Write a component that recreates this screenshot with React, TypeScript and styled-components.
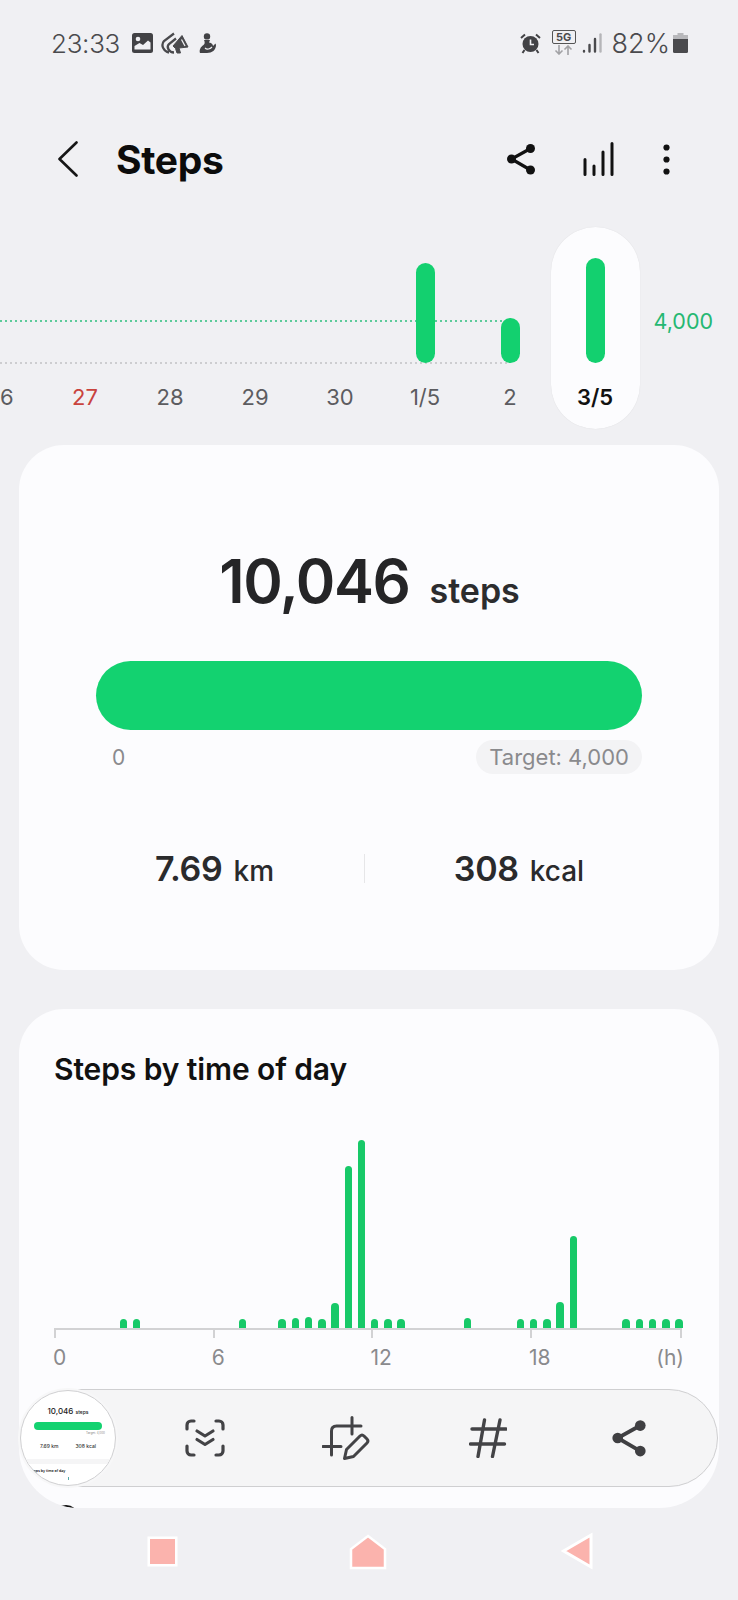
import React from "react";
import styled, { createGlobalStyle } from "styled-components";

const days = [
  { label: "26", height: 0 },
  { label: "27", height: 0, holiday: true },
  { label: "28", height: 0 },
  { label: "29", height: 0 },
  { label: "30", height: 0 },
  { label: "1/5", height: 100 },
  { label: "2", height: 45 },
  { label: "3/5", height: 105, active: true },
];

// one slot per half hour, pixel heights read off the chart
const halfHours = [
  0, 0, 0, 0, 0, 9.5, 9.5, 0, 0, 0, 0, 0, 0, 0, 9.5, 0, 0, 9.5, 10.5, 11, 9.5,
  25, 162, 188, 9.5, 9.5, 9.5, 0, 0, 0, 0, 10.5, 0, 0, 0, 9.5, 9.5, 9.5, 26, 92,
  0, 0, 0, 9.5, 9.5, 9.5, 9.5, 9.5,
];

const hourLabels = ["0", "6", "12", "18"];

const App = () => {
  return (
    <Page>
      <GlobalStyle />
      <StatusBar>
        <StatusGroup>
          <Clock>23:33</Clock>
          <GalleryIcon />
          <MegaphoneIcon />
          <PersonIcon />
        </StatusGroup>
        <StatusGroup>
          <AlarmIcon />
          <Network>
            <NetworkBadge>5G</NetworkBadge>
            <NetworkArrows />
          </Network>
          <SignalIcon />
          <Battery>82%</Battery>
          <BatteryIcon />
        </StatusGroup>
      </StatusBar>

      <Header>
        <HeaderLeft>
          <BackIcon />
          <Title>Steps</Title>
        </HeaderLeft>
        <HeaderActions>
          <ShareIcon width={28} height={32} />
          <BarsIcon />
          <MoreIcon />
        </HeaderActions>
      </Header>

      <DayChart>
        <GuideLine $top={93} $color="#5ccb9a" />
        <GuideLine $top={135} $color="#cdcdd0" />
        {days.map((day) => (
          <DayColumn key={day.label} $active={day.active}>
            <DayBarArea>{day.height > 0 && <DayBar $height={day.height} />}</DayBarArea>
            <DayLabel $active={day.active} $holiday={day.holiday}>
              {day.label}
            </DayLabel>
          </DayColumn>
        ))}
        <TargetValue>4,000</TargetValue>
      </DayChart>

      <SummaryCard>
        <StepsRow>
          <StepsValue>10,046</StepsValue>
          <StepsUnit>steps</StepsUnit>
        </StepsRow>
        <ProgressBar />
        <ProgressFooter>
          <ProgressZero>0</ProgressZero>
          <TargetPill>Target: 4,000</TargetPill>
        </ProgressFooter>
        <Stats>
          <Stat>
            <StatValue>7.69</StatValue>
            <StatUnit>km</StatUnit>
          </Stat>
          <StatDivider />
          <Stat>
            <StatValue>308</StatValue>
            <StatUnit>kcal</StatUnit>
          </Stat>
        </Stats>
      </SummaryCard>

      <TimeCard>
        <CardTitle>Steps by time of day</CardTitle>
        <Plot>
          {halfHours.map((height, index) => (
            <Slot key={index}>{height > 0 && <HourBar $height={height} />}</Slot>
          ))}
        </Plot>
        <Axis>
          <AxisTick />
          <AxisTick />
          <AxisTick />
          <AxisTick $last />
        </Axis>
        <AxisLabels>
          {hourLabels.map((label) => (
            <AxisLabel key={label}>{label}</AxisLabel>
          ))}
          <AxisUnit>(h)</AxisUnit>
        </AxisLabels>
        <NextSectionIcon />
      </TimeCard>

      <NavBar>
        <NavSquare />
        <NavHome viewBox="0 0 38 36">
          <path d="M19 2 L36 15 V34 H2 V15 Z" />
        </NavHome>
        <NavBack viewBox="0 0 34 38">
          <path d="M2.5 19 L30 3 V35 Z" />
        </NavBack>
      </NavBar>

      <CaptureToolbar>
        <Thumbnail>
          <ThumbSteps>
            10,046 <small>steps</small>
          </ThumbSteps>
          <ThumbBar />
          <ThumbTarget>Target: 4,000</ThumbTarget>
          <ThumbStats>
            <span>7.69 km</span>
            <span>308 kcal</span>
          </ThumbStats>
          <ThumbBand />
          <ThumbTitle>Steps by time of day</ThumbTitle>
          <ThumbTick />
        </Thumbnail>
        <ToolSlot>
          <ScanIcon />
        </ToolSlot>
        <ToolSlot>
          <CropEditIcon />
        </ToolSlot>
        <ToolSlot>
          <HashIcon />
        </ToolSlot>
        <ToolSlot>
          <ShareIcon width={34} height={38} />
        </ToolSlot>
      </CaptureToolbar>
    </Page>
  );
};

export default App;

const GalleryIcon = () => (
  <svg width="21" height="20" viewBox="0 0 21 20">
    <rect width="21" height="20" rx="2.5" fill="#424245" />
    <circle cx="6" cy="6" r="2.3" fill="#f0f0f3" />
    <path d="M2.5 16.5 V13 L7.5 10 L11 12 L16 7.5 L18.5 9.5 V16.5 Z" fill="#f0f0f3" />
  </svg>
);

const MegaphoneIcon = () => (
  <svg width="28" height="22" viewBox="0 0 28 22" fill="none" stroke="#4a4a4d" strokeWidth="2.3">
    <path d="M8 20.5 C2.5 19.5 -0.5 13 3 9 L13 1.5" />
    <path d="M13 20.5 C8 20.5 5 15 8 12 L15 6.5" />
    <path d="M12 14 L21 3.5 L27 15 L18 16 L19.5 21 L16 21 L14.5 16.5 Z" fill="#4a4a4d" strokeWidth="1" strokeLinejoin="round" />
    <path d="M20.5 7.5 L24 14" stroke="#f0f0f3" strokeWidth="1.3" />
  </svg>
);

const PersonIcon = () => (
  <PersonSvg width="17" height="20" viewBox="0 0 17 20" fill="#424245">
    <circle cx="8" cy="3.4" r="3.2" />
    <path d="M5 7 H11 L10 9.5 C13 10 14 11.5 14 13 L16.5 10.5 L17 12 C17 17 13 20 8 20 H1 C0 17 1.5 14 4.5 12 C6 11 6 9 5 7 Z" />
    <path d="M6 15 C8 17 11 16 13 14" stroke="#f0f0f3" strokeWidth="1.1" fill="none" />
  </PersonSvg>
);

const AlarmIcon = () => (
  <AlarmSvg width="21" height="21" viewBox="0 0 21 21" fill="none">
    <circle cx="10.5" cy="11" r="8" fill="#424245" />
    <path d="M10.5 6.5 V11.5 H14" stroke="#f0f0f3" strokeWidth="1.6" />
    <path d="M1 5 L5 1.5 M20 5 L16 1.5" stroke="#424245" strokeWidth="2" />
    <path d="M4.5 17 L2.5 20 M16.5 17 L18.5 20" stroke="#424245" strokeWidth="2" />
  </AlarmSvg>
);

const NetworkArrows = () => (
  <svg width="23" height="10" viewBox="0 0 23 10" fill="none" stroke="#a2a2a5" strokeWidth="1.6">
    <path d="M7 0 V9 M3.5 5.5 L7 9 L10.5 5.5" />
    <path d="M16 10 V1 M12.5 4.5 L16 1 L19.5 4.5" />
  </svg>
);

const SignalIcon = () => (
  <svg width="20" height="20" viewBox="0 0 20 20" fill="none" strokeWidth="2.4" strokeLinecap="round">
    <path d="M2 18 V18.5 M7.5 12 V18.5 M13 6 V18.5" stroke="#4a4a4d" />
    <path d="M18.5 1.5 V18.5" stroke="#b5b5b8" />
  </svg>
);

const BatteryIcon = () => (
  <svg width="15" height="20" viewBox="0 0 15 20">
    <path d="M4.5 0 H10.5 V2 H15 V7 H0 V2 H4.5 Z" fill="#b8b8bb" />
    <path d="M0 6 H15 V18.5 Q15 20 13.5 20 H1.5 Q0 20 0 18.5 Z" fill="#4a4a4d" />
  </svg>
);

const BackIcon = () => (
  <svg width="20" height="36" viewBox="0 0 20 36" fill="none" stroke="#161616" strokeWidth="2.6" strokeLinecap="round" strokeLinejoin="round">
    <path d="M18.5 1.5 L1.5 18 L18.5 34.5" />
  </svg>
);

const ShareIcon = ({ width, height }: { width: number; height: number }) => (
  <ShareSvg width={width} height={height} viewBox="0 0 28 32">
    <path d="M23.5 5.5 L4.5 16 L23.5 27" fill="none" stroke="currentColor" strokeWidth="3.2" />
    <circle cx="23.5" cy="5.5" r="4.5" />
    <circle cx="4.5" cy="16" r="4.5" />
    <circle cx="23.5" cy="27" r="4.5" />
  </ShareSvg>
);

const BarsIcon = () => (
  <svg width="32" height="34" viewBox="0 0 32 34" fill="none" stroke="#111" strokeWidth="3" strokeLinecap="round">
    <path d="M2 17.5 V32.5 M11 24 V32.5 M20 10 V32.5 M29 1.5 V32.5" />
  </svg>
);

const MoreIcon = () => (
  <svg width="7" height="31" viewBox="0 0 7 31" fill="#111">
    <circle cx="3.5" cy="3.5" r="3.1" />
    <circle cx="3.5" cy="15.5" r="3.1" />
    <circle cx="3.5" cy="27.5" r="3.1" />
  </svg>
);

const ScanIcon = () => (
  <svg width="40" height="38" viewBox="0 0 40 38" fill="none" stroke="#434346" strokeWidth="3.2" strokeLinecap="round" strokeLinejoin="round">
    <path d="M2 10 V6 A4 4 0 0 1 6 2 H9 M31 2 H34 A4 4 0 0 1 38 6 V10" />
    <path d="M2 27 V32 A4 4 0 0 0 6 36 H9 M31 36 H34 A4 4 0 0 0 38 32 V27" />
    <path d="M12 12 L20 17 L28 12 M12 20.5 L20 25.5 L28 20.5" />
  </svg>
);

const CropEditIcon = () => (
  <svg width="48" height="45" viewBox="0 0 48 45" fill="none" stroke="#434346" strokeWidth="3" strokeLinecap="round" strokeLinejoin="round">
    <path d="M1 30.5 H19 M9.5 39 V15 Q9.5 10 14.5 10 H39 M30 1.5 V18" />
    <path d="M22.5 42.5 L24.5 33.5 L38 20 Q40 18 42 20 L45 23 Q47 25 45 27 L31.5 40.5 Z" />
  </svg>
);

const HashIcon = () => (
  <svg width="38" height="40" viewBox="0 0 38 40" fill="none" stroke="#434346" strokeWidth="3.4" strokeLinecap="round">
    <path d="M3 11 H37 M1.5 26 H35.5 M15.5 2 L9 38.5 M31 2 L23.5 38.5" />
  </svg>
);

const GlobalStyle = createGlobalStyle`
  html, body {
    margin: 0;
    padding: 0;
    background: #f0f0f3;
  }

  body {
    font-family: Inter, "Noto Sans", sans-serif;
  }
`;

const Page = styled.div`
  position: relative;
  width: 738px;
  height: 1600px;
  display: flex;
  flex-direction: column;
  overflow: hidden;
  background: #f0f0f3;
`;

const StatusBar = styled.div`
  height: 86px;
  padding: 0 50px 0 51px;
  display: flex;
  align-items: center;
  justify-content: space-between;
  box-sizing: border-box;
`;

const StatusGroup = styled.div`
  display: flex;
  align-items: center;
  gap: 8px;
`;

const PersonSvg = styled.svg`
  margin-left: 2px;
`;

const AlarmSvg = styled.svg`
  margin-right: 3px;
`;

const Clock = styled.span`
  margin-right: 4px;
  font-size: 26px;
  font-weight: 300;
  letter-spacing: -0.3px;
  color: #4a4a4d;
`;

const Network = styled.div`
  width: 24px;
  margin: -2px -2px 0 0;
  display: flex;
  flex-direction: column;
  align-items: center;
  gap: 1px;
`;

const NetworkBadge = styled.div`
  width: 24px;
  height: 14px;
  box-sizing: border-box;
  border: 1.4px solid #555;
  border-radius: 2px;
  font-size: 11px;
  line-height: 12px;
  font-weight: 700;
  text-align: center;
  color: #4a4a4d;
`;

const Battery = styled.span`
  margin: 0 -5px 0 2px;
  font-size: 27px;
  font-weight: 300;
  color: #4a4a4d;
`;

const Header = styled.header`
  height: 142px;
  padding: 4px 68px 0 58px;
  display: flex;
  align-items: center;
  justify-content: space-between;
  box-sizing: border-box;
`;

const HeaderLeft = styled.div`
  display: flex;
  align-items: center;
  gap: 38px;
`;

const Title = styled.h1`
  margin: 0;
  font-size: 39px;
  font-weight: 700;
  letter-spacing: -0.3px;
  color: #0c0c0c;
`;

const HeaderActions = styled.div`
  display: flex;
  align-items: center;
  gap: 48px;
  color: #111;
`;

const ShareSvg = styled.svg`
  display: block;
  fill: currentColor;
`;

const DayChart = styled.section`
  position: relative;
  height: 202px;
  margin: -1px 0 0 -42.5px;
  width: 780px;
  display: flex;
`;

const GuideLine = styled.div<{ $top: number; $color: string }>`
  position: absolute;
  top: ${(p) => p.$top}px;
  left: 42.5px;
  width: 508px;
  height: 2px;
  background-image: repeating-linear-gradient(
    90deg,
    ${(p) => p.$color} 0 2px,
    transparent 2px 5px
  );
`;

const DayColumn = styled.div<{ $active?: boolean }>`
  position: relative;
  flex: none;
  width: ${(p) => (p.$active ? "89px" : "85px")};
  margin: ${(p) => (p.$active ? "0 -2px" : "0")};
  display: flex;
  flex-direction: column;
  align-items: center;
  border-radius: 45px;
  background: ${(p) => (p.$active ? "#fcfcfe" : "transparent")};
  box-shadow: ${(p) => (p.$active ? "0 0 1px rgba(0, 0, 0, 0.12)" : "none")};
`;

const DayBarArea = styled.div`
  height: 136px;
  display: flex;
  align-items: flex-end;
`;

const DayBar = styled.div<{ $height: number }>`
  width: 19px;
  height: ${(p) => p.$height}px;
  border-radius: 10px;
  background: #13d06f;
`;

const DayLabel = styled.span<{ $active?: boolean; $holiday?: boolean }>`
  margin-top: 20px;
  font-size: 22px;
  line-height: 28px;
  font-weight: ${(p) => (p.$active ? 600 : 400)};
  color: ${(p) => (p.$active ? "#111" : p.$holiday ? "#c9433d" : "#5c5c60")};
`;

const TargetValue = styled.span`
  margin: 82px 0 0 16px;
  font-size: 21.5px;
  line-height: 24px;
  color: #25b872;
`;

const SummaryCard = styled.section`
  height: 525px;
  margin: 16px 19px 0;
  border-radius: 45px;
  background: #fcfcfe;
  display: flex;
  flex-direction: column;
  box-sizing: border-box;
`;

const StepsRow = styled.div`
  margin: 99px 0 0 1px;
  display: flex;
  align-items: baseline;
  justify-content: center;
  gap: 20px;
`;

const StepsValue = styled.span`
  font-size: 60px;
  line-height: 74px;
  font-weight: 600;
  letter-spacing: -1.4px;
  color: #252527;
`;

const StepsUnit = styled.span`
  font-size: 34px;
  font-weight: 600;
  color: #2c2c2e;
`;

const ProgressBar = styled.div`
  height: 69px;
  margin: 43px 77px 0;
  border-radius: 35px;
  background: #13d270;
`;

const ProgressFooter = styled.div`
  margin: 10px 77px 0 93px;
  display: flex;
  align-items: center;
  justify-content: space-between;
`;

const ProgressZero = styled.span`
  font-size: 21px;
  color: #8a8a8d;
`;

const TargetPill = styled.span`
  height: 34px;
  padding: 0 13px;
  border-radius: 17px;
  background: #f3f3f5;
  font-size: 22px;
  line-height: 34px;
  color: #8a8a8d;
`;

const Stats = styled.div`
  margin: 74px 46px 0;
  display: grid;
  grid-template-columns: 299px 1px 1fr;
  align-items: center;
`;

const Stat = styled.div`
  display: flex;
  align-items: baseline;
  justify-content: center;
  gap: 11px;
  color: #2a2a2c;
`;

const StatValue = styled.span`
  font-size: 34px;
  font-weight: 600;
  letter-spacing: -0.3px;
`;

const StatUnit = styled.span`
  font-size: 28px;
  font-weight: 500;
`;

const StatDivider = styled.div`
  height: 29px;
  background: #e6e6e8;
`;

const TimeCard = styled.section`
  height: 499px;
  margin: 39px 19px 0;
  padding: 42px 35px 0;
  border-radius: 45px 45px 60px 60px;
  background: #fcfcfe;
  overflow: hidden;
  box-sizing: border-box;
`;

const CardTitle = styled.h2`
  margin: 0;
  font-size: 30px;
  line-height: 36px;
  font-weight: 600;
  letter-spacing: -0.1px;
  color: #111;
`;

const Plot = styled.div`
  width: 635px;
  height: 199px;
  margin: 42px 0 0 -3.5px;
  display: flex;
  align-items: flex-end;
`;

const Slot = styled.div`
  flex: 1;
  display: flex;
  justify-content: center;
`;

const HourBar = styled.div<{ $height: number }>`
  width: 7.5px;
  height: ${(p) => p.$height}px;
  border-radius: 4px 4px 0 0;
  background: #17c968;
`;

const Axis = styled.div`
  width: 628px;
  height: 10px;
  border-top: 2px solid #d2d2d4;
  display: grid;
  grid-template-columns: 158.7fr 158.7fr 158.7fr 152fr;
  box-sizing: border-box;
`;

const AxisTick = styled.div<{ $last?: boolean }>`
  border-left: 2px solid #d2d2d4;
  border-right: ${(p) => (p.$last ? "2px solid #d2d2d4" : "none")};
`;

const AxisLabels = styled.div`
  width: 631px;
  margin: 8px 0 0 -1px;
  display: grid;
  grid-template-columns: 158.7px 158.7px 158.7px 1fr auto;
  font-size: 21px;
  line-height: 24px;
  color: #8a8a8d;
`;

const AxisLabel = styled.span``;

const AxisUnit = styled.span``;

const NextSectionIcon = styled.div`
  width: 26px;
  height: 26px;
  margin: 135px 0 0 -1px;
  border: 2.5px solid #111;
  border-radius: 50%;
  box-sizing: border-box;
`;

const NavBar = styled.nav`
  flex: 1;
  padding: 28px 143px 0 150px;
  display: flex;
  align-items: flex-start;
  justify-content: space-between;
`;

const NavSquare = styled.div`
  width: 25px;
  height: 25px;
  margin-top: 3px;
  background: #fbb3ad;
  box-shadow: 0 0 0 2.5px #fff;
`;

const NavHome = styled.svg`
  width: 38px;
  height: 36px;
  margin-top: -2px;
  fill: #fbb3ad;
  stroke: #fff;
  stroke-width: 2.5;
`;

const NavBack = styled.svg`
  width: 34px;
  height: 38px;
  margin-top: -4px;
  fill: #fbb3ad;
  stroke: #fff;
  stroke-width: 3;
`;

const CaptureToolbar = styled.div`
  position: absolute;
  top: 1389px;
  left: 19px;
  width: 699px;
  height: 98px;
  border: 1px solid #cfcfd1;
  border-radius: 49px;
  background: #f5f5f6;
  display: flex;
  align-items: center;
  box-sizing: border-box;
`;

const Thumbnail = styled.div`
  flex: none;
  width: 96px;
  height: 96px;
  margin: 0 18px 0 0;
  padding-top: 15px;
  border: 1px solid #d0d0d2;
  border-radius: 50%;
  background: #fff;
  box-shadow: 0 0 0 2px #f7f7f8;
  display: flex;
  flex-direction: column;
  align-items: center;
  overflow: hidden;
  box-sizing: border-box;

  & small {
    font-size: 5px;
  }
`;

const ThumbSteps = styled.span`
  font-size: 8px;
  line-height: 10px;
  font-weight: 500;
  color: #222;
`;

const ThumbBar = styled.div`
  width: 68px;
  height: 8px;
  margin-top: 5px;
  border-radius: 4px;
  background: #13d270;
`;

const ThumbTarget = styled.span`
  align-self: flex-end;
  margin: 1px 10px 0 0;
  font-size: 3px;
  line-height: 4px;
  color: #888;
`;

const ThumbStats = styled.div`
  width: 56px;
  margin-top: 8px;
  display: flex;
  justify-content: space-between;
  font-size: 5px;
  line-height: 7px;
  font-weight: 500;
  color: #333;
`;

const ThumbBand = styled.div`
  width: 100%;
  height: 5px;
  margin-top: 9px;
  background: #f5f5f6;
`;

const ThumbTitle = styled.span`
  align-self: flex-start;
  margin: 4px 0 0 9px;
  font-size: 3.6px;
  line-height: 6px;
  font-weight: 600;
  white-space: nowrap;
  color: #222;
`;

const ThumbTick = styled.div`
  width: 1px;
  height: 3px;
  margin-top: 3px;
  background: #5aa;
`;

const ToolSlot = styled.div`
  flex: none;
  width: 141.5px;
  display: flex;
  justify-content: center;
  color: #3f3f42;
`;
